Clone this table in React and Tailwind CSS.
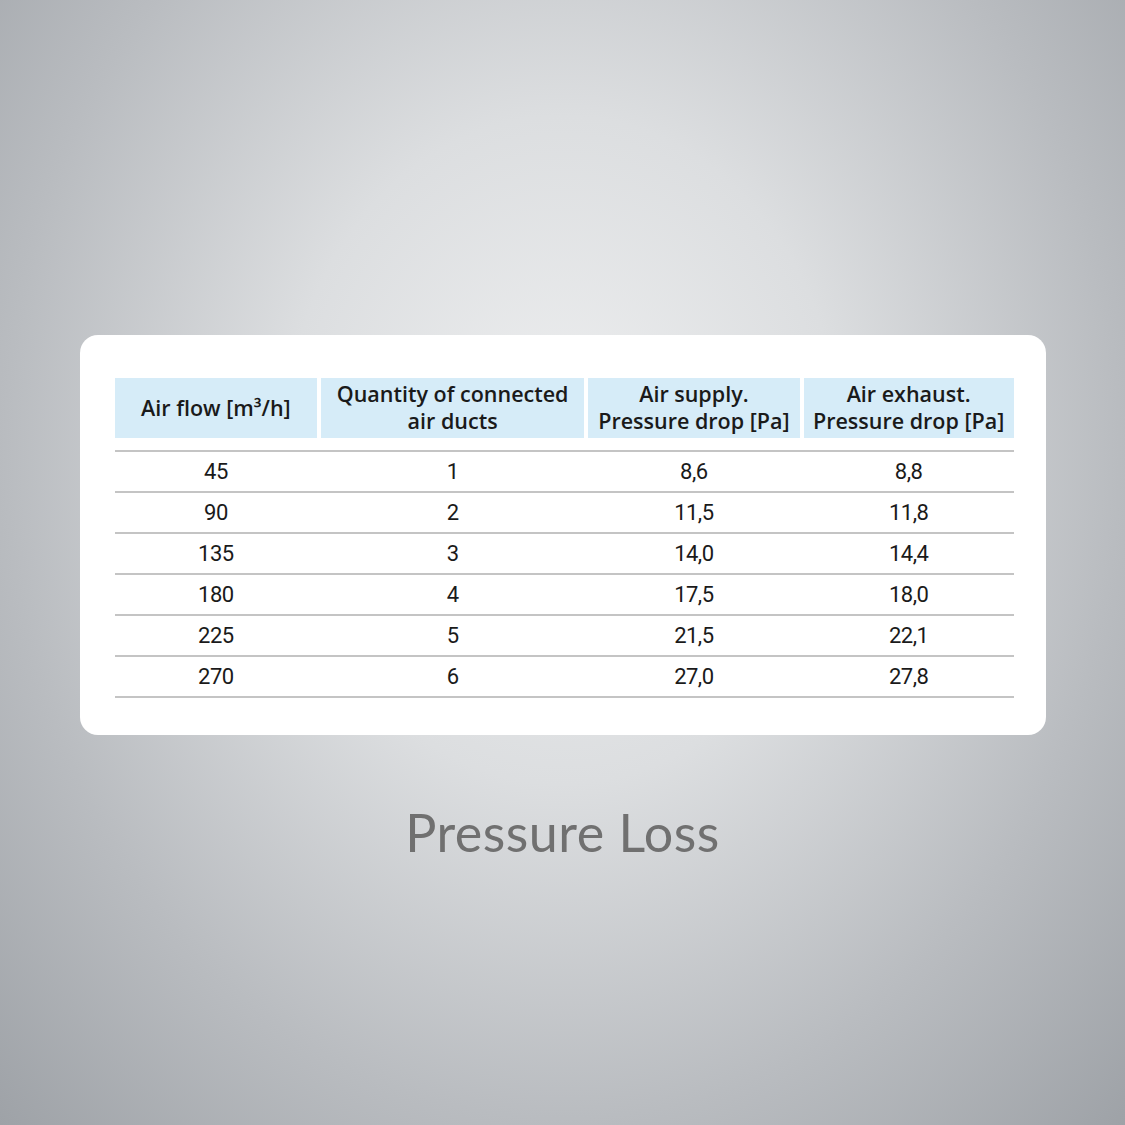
import React from "react";

const rows = [
  ["45", "1", "8,6", "8,8"],
  ["90", "2", "11,5", "11,8"],
  ["135", "3", "14,0", "14,4"],
  ["180", "4", "17,5", "18,0"],
  ["225", "5", "21,5", "22,1"],
  ["270", "6", "27,0", "27,8"],
];

const cols = ["w-[203px]", "w-[263px]", "w-[212px]", "w-[210px]"];

const App = () => {
  return (
    <div className="w-[1125px] h-[1125px] flex flex-col items-center bg-[radial-gradient(ellipse_at_50%_40%,#eeeff0_0%,#dcdee0_35%,#b9bcc0_70%,#9ea2a7_100%)]">
      <div className="mt-[335px] w-[966px] h-[400px] bg-white rounded-[18px] pt-[43px] pl-[35px]">
        <div className="w-[899px] text-[#1a1a1a]">
          {/* header */}
          <div className="flex gap-[4px] h-[60px] font-['Open_Sans',sans-serif] font-semibold text-[21.5px] leading-[27px] tracking-[0px]">
            <div className={`${cols[0]} bg-[#d6ecf8] flex items-center justify-center pb-[2px]`}>
              Air flow [m³/h]
            </div>
            <div className={`${cols[1]} bg-[#d6ecf8] flex flex-col items-center justify-center text-center pb-[2px]`}>
              <span>Quantity of connected</span>
              <span>air ducts</span>
            </div>
            <div className={`${cols[2]} bg-[#d6ecf8] flex flex-col items-center justify-center text-center pb-[2px]`}>
              <span>Air supply.</span>
              <span>Pressure drop [Pa]</span>
            </div>
            <div className={`${cols[3]} bg-[#d6ecf8] flex flex-col items-center justify-center text-center pb-[2px]`}>
              <span>Air exhaust.</span>
              <span>Pressure drop [Pa]</span>
            </div>
          </div>

          {/* body */}
          <div className="mt-[12px] border-t-2 border-[#c4c4c4] font-['Roboto',sans-serif]">
            {rows.map((r, i) => (
              <div key={i} className="flex gap-[4px] h-[41px] border-b-2 border-[#c4c4c4] items-center text-[22px] tracking-[-0.5px]">
                {r.map((v, j) => (
                  <div key={j} className={`${cols[j]} text-center`}>
                    {v}
                  </div>
                ))}
              </div>
            ))}
          </div>
        </div>
      </div>

      <div className="mt-[71px] font-['Lato',sans-serif] text-[52px] leading-none text-[#707070] tracking-[0.5px]">
        Pressure Loss
      </div>
    </div>
  );
};

export default App;
